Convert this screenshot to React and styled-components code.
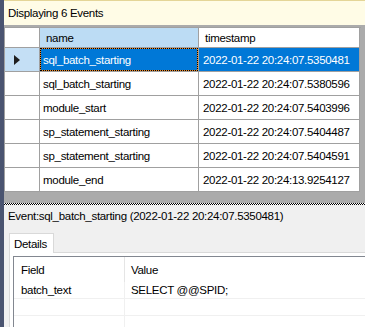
import React from 'react';
import styled, { createGlobalStyle, css } from 'styled-components';

const GlobalStyle = createGlobalStyle`
  html, body {
    margin: 0;
    padding: 0;
    overflow: hidden;
  }
  body {
    font-family: "Liberation Sans", Arial, sans-serif;
    font-size: 11.5px;
    letter-spacing: -0.3px;
    color: #000;
  }
`;

const Window = styled.div`
  display: flex;
  width: 365px;
  height: 327px;
  overflow: hidden;
`;

const LeftStrip = styled.div`
  width: 4px;
  flex: none;
  background: #4a5470;
`;

const Main = styled.div`
  flex: 1;
  display: flex;
  flex-direction: column;
  min-width: 0;
  min-height: 0;
`;

const InfoBar = styled.div`
  flex: none;
  height: 24px;
  border-top: 1px solid #e4d597;
  background: #fffce6;
  display: flex;
  align-items: center;
  padding-left: 4px;
`;

const GridArea = styled.div`
  flex: none;
  height: 176px;
  background: #ababab;
  padding-top: 2px;
`;

const Grid = styled.div`
  display: grid;
  grid-template-columns: 35px 159px 161px;
  width: 356px;
  border-left: 1px solid #a0a0a0;
  border-top: 1px solid #a0a0a0;
`;

const HeadCell = styled.div`
  height: 19px;
  border-right: 1px solid #a0a0a0;
  border-bottom: 1px solid #a0a0a0;
  background: ${p => (p.active ? '#bcdcf4' : '#fff')};
  display: flex;
  align-items: center;
  padding-left: 6px;
`;

const RowHead = styled.div`
  height: 23px;
  border-right: 1px solid #a0a0a0;
  border-bottom: 1px solid #a0a0a0;
  background: ${p => (p.active ? '#c4dff5' : '#fff')};
  display: flex;
  align-items: center;
  padding-left: 9px;
`;

const Arrow = styled.span`
  width: 0;
  height: 0;
  border-top: 5px solid transparent;
  border-bottom: 5px solid transparent;
  border-left: 6px solid #1e1e1e;
`;

const Cell = styled.div`
  position: relative;
  height: 23px;
  border-right: 1px solid #a0a0a0;
  border-bottom: 1px solid #a0a0a0;
  display: flex;
  align-items: center;
  padding-left: ${p => p.pad}px;
  white-space: nowrap;
  background: #fff;
  ${p => p.selected && css`
    background: #0078d7;
    color: #fff;
  `}
  ${p => p.focused && css`
    box-shadow: inset 0 0 0 1px #f08a24;
    &::after {
      content: '';
      position: absolute;
      inset: 0;
      border: 1px dotted #000;
    }
  `}
`;

const Splitter = styled.div`
  flex: none;
  height: 2px;
  background: repeating-conic-gradient(#000 0 25%, #fff 0 50%) 0 0 / 2px 2px;
`;

const Panel = styled.div`
  flex: 1;
  min-height: 0;
  overflow: hidden;
  background: #f0f0f0;
  display: flex;
  flex-direction: column;
`;

const EventLabel = styled.div`
  flex: none;
  height: 22px;
  line-height: 22px;
  padding-left: 4px;
  white-space: nowrap;
`;

const TabStrip = styled.div`
  flex: none;
  display: flex;
  margin-top: 6px;
  padding-left: 5px;
`;

const Tab = styled.div`
  position: relative;
  z-index: 1;
  box-sizing: border-box;
  width: 45px;
  height: 20px;
  margin-bottom: -1px;
  border: 1px solid #d9d9d9;
  border-bottom: none;
  background: #fff;
  display: flex;
  align-items: center;
  padding-left: 4px;
`;

const TabPage = styled.div`
  flex: 1;
  min-height: 0;
  margin-left: 5px;
  border-top: 1px solid #d9d9d9;
  border-left: 1px solid #d9d9d9;
  background: #fff;
  padding: 3px 0 0 3px;
`;

const ListView = styled.div`
  height: 100%;
  border-left: 1px solid #828790;
  border-top: 1px solid #828790;
  background: #fff;
  display: grid;
  grid-template-columns: 111px 1fr;
  grid-template-rows: 25px;
  grid-auto-rows: 17px;
  align-content: start;
`;

const ListHead = styled.div`
  display: flex;
  align-items: center;
  padding-left: ${p => p.pad}px;
  border-right: ${p => (p.divider ? '1px solid #e5e5e5' : 'none')};
`;

const ListCell = styled.div`
  display: flex;
  align-items: center;
  padding-left: ${p => p.pad}px;
  border-bottom: 1px solid #f0f0f0;
  border-right: ${p => (p.divider ? '1px solid #f0f0f0' : 'none')};
  white-space: nowrap;
`;

const events = [
  ['sql_batch_starting', '2022-01-22 20:24:07.5350481'],
  ['sql_batch_starting', '2022-01-22 20:24:07.5380596'],
  ['module_start', '2022-01-22 20:24:07.5403996'],
  ['sp_statement_starting', '2022-01-22 20:24:07.5404487'],
  ['sp_statement_starting', '2022-01-22 20:24:07.5404591'],
  ['module_end', '2022-01-22 20:24:13.9254127'],
];

const fields = [
  ['batch_text', 'SELECT @@SPID;'],
  ['', ''],
  ['', ''],
];

export default function App() {
  return (
    <Window>
      <GlobalStyle />
      <LeftStrip />
      <Main>
        <InfoBar>Displaying 6 Events</InfoBar>
        <GridArea>
          <Grid>
            <HeadCell />
            <HeadCell active>name</HeadCell>
            <HeadCell>timestamp</HeadCell>
            {events.map(([name, ts], i) => (
              <React.Fragment key={i}>
                <RowHead active={i === 0}>{i === 0 && <Arrow />}</RowHead>
                <Cell pad={3} selected={i === 0} focused={i === 0}>{name}</Cell>
                <Cell pad={4} selected={i === 0}>{ts}</Cell>
              </React.Fragment>
            ))}
          </Grid>
        </GridArea>
        <Splitter />
        <Panel>
          <EventLabel>Event:sql_batch_starting (2022-01-22 20:24:07.5350481)</EventLabel>
          <TabStrip>
            <Tab>Details</Tab>
          </TabStrip>
          <TabPage>
            <ListView>
              <ListHead pad={7} divider>Field</ListHead>
              <ListHead pad={6}>Value</ListHead>
              {fields.map(([f, v], i) => (
                <React.Fragment key={i}>
                  <ListCell pad={7} divider>{f}</ListCell>
                  <ListCell pad={6}>{v}</ListCell>
                </React.Fragment>
              ))}
            </ListView>
          </TabPage>
        </Panel>
      </Main>
    </Window>
  );
}
